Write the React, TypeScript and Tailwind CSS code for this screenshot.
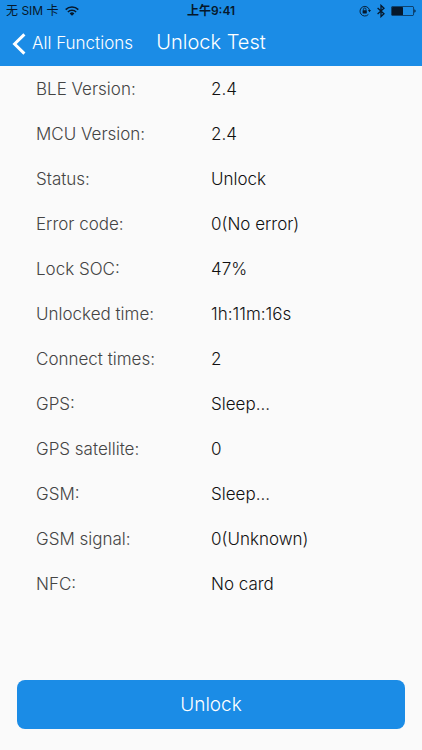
import React from 'react';

interface InfoRow {
  label: string;
  value: string;
}

const rows: InfoRow[] = [
  { label: 'BLE Version:', value: '2.4' },
  { label: 'MCU Version:', value: '2.4' },
  { label: 'Status:', value: 'Unlock' },
  { label: 'Error code:', value: '0(No error)' },
  { label: 'Lock SOC:', value: '47%' },
  { label: 'Unlocked time:', value: '1h:11m:16s' },
  { label: 'Connect times:', value: '2' },
  { label: 'GPS:', value: 'Sleep...' },
  { label: 'GPS satellite:', value: '0' },
  { label: 'GSM:', value: 'Sleep...' },
  { label: 'GSM signal:', value: '0(Unknown)' },
  { label: 'NFC:', value: 'No card' },
];

const WifiIcon = () => (
  <svg width="14" height="10" viewBox="0 0 14 10" fill="none" stroke="currentColor" strokeWidth="1.6" aria-hidden="true">
    <path d="M0.7 3.6a9 9 0 0 1 12.6 0" />
    <path d="M2.9 6a5.8 5.8 0 0 1 8.2 0" />
    <path d="M7 9.8 4.6 7.4a3.4 3.4 0 0 1 4.8 0z" fill="currentColor" stroke="none" />
  </svg>
);

const RotationLockIcon = () => (
  <svg width="12" height="12" viewBox="0 0 12 12" fill="none" stroke="currentColor" aria-hidden="true">
    <path d="M9.4 9.4A4.8 4.8 0 1 1 10.5 5.2" strokeWidth="0.9" />
    <path d="M8.9 5.1h3.1l-1.5 2.2z" fill="currentColor" stroke="none" />
    <rect x="3.6" y="5.3" width="4.2" height="3.2" rx="0.4" fill="currentColor" stroke="none" />
    <path d="M4.4 5.4V4.3a1.3 1.3 0 0 1 2.6 0v1.1" strokeWidth="0.8" />
  </svg>
);

const BluetoothIcon = () => (
  <svg width="8" height="14" viewBox="0 0 8 14" fill="none" stroke="currentColor" strokeWidth="1.3" aria-hidden="true">
    <path d="M0.6 3.9 7 9.8 4 12.6V1.4L7 4.2 0.6 10.1" />
  </svg>
);

const BatteryIcon = () => (
  <svg width="25" height="10" viewBox="0 0 25 10" aria-hidden="true">
    <rect x="0.4" y="0.4" width="22.2" height="9.2" rx="1.4" fill="none" stroke="currentColor" strokeWidth="0.7" />
    <rect x="1" y="1" width="11" height="8" rx="0.6" fill="currentColor" />
    <path d="M23.4 3.3c1.6.4 1.6 3 0 3.4z" fill="currentColor" />
  </svg>
);

const StatusBar = () => (
  <div className="grid h-[22px] grid-cols-[1fr_auto_1fr] items-center px-1.5 text-xs text-[#06182b]">
    <div className="flex items-center gap-1.5">
      <span>无 SIM 卡</span>
      <WifiIcon />
    </div>
    <span className="font-semibold">上午9:41</span>
    <div className="flex items-center justify-end gap-1.5">
      <RotationLockIcon />
      <BluetoothIcon />
      <BatteryIcon />
    </div>
  </div>
);

const App: React.FC = () => {
  return (
    <div className="flex min-h-screen flex-col bg-[#fafafa] font-['Inter','Noto_Sans_CJK_SC',sans-serif]">
      <header className="bg-[#1b8ce6]">
        <StatusBar />
        <nav className="grid h-11 grid-cols-[1fr_auto_1fr] items-center px-3 text-white">
          <button type="button" className="flex items-center gap-1.5 text-[17px] font-light whitespace-nowrap">
            <svg width="14" height="22" viewBox="0 0 14 22" fill="none" stroke="currentColor" strokeWidth="3" aria-hidden="true">
              <path d="M12.4 1.4 2.6 11l9.8 9.6" />
            </svg>
            All Functions
          </button>
          <h1 className="pb-1 text-xl font-light">Unlock Test</h1>
        </nav>
      </header>

      <main className="flex flex-1 flex-col">
        <dl className="pt-px text-[17px]">
          {rows.map((row) => (
            <div key={row.label} className="grid h-[45px] grid-cols-2 items-center">
              <dt className="pl-9 font-light text-[#444]">{row.label}</dt>
              <dd className="font-light text-[#111]">{row.value}</dd>
            </div>
          ))}
        </dl>

        <div className="mt-auto px-[17px] pb-[21px]">
          <button type="button" className="h-[49px] w-full rounded-lg bg-[#1b8ce6] pt-0.5 text-[19px] font-light text-white">
            Unlock
          </button>
        </div>
      </main>
    </div>
  );
};

export default App;
